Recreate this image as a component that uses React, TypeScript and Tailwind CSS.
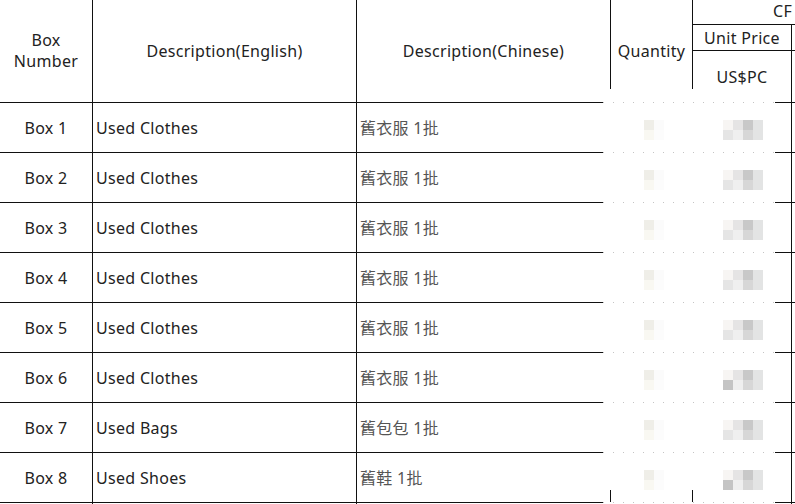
import React from "react";

const rows: [string, string, string, boolean][] = [
  ["Box 1", "Used Clothes", "舊衣服 1批", false],
  ["Box 2", "Used Clothes", "舊衣服 1批", false],
  ["Box 3", "Used Clothes", "舊衣服 1批", false],
  ["Box 4", "Used Clothes", "舊衣服 1批", false],
  ["Box 5", "Used Clothes", "舊衣服 1批", false],
  ["Box 6", "Used Clothes", "舊衣服 1批", true],
  ["Box 7", "Used Bags", "舊包包 1批", false],
  ["Box 8", "Used Shoes", "舊鞋 1批", true],
];

function Separator() {
  return (
    <div className="flex h-px w-full">
      <div className="w-[603px] bg-[#111]" />
      <div className="w-[172px] bg-[repeating-linear-gradient(90deg,#c4c4c4_0_1px,transparent_1px_10px)]" />
      <div className="flex-1 bg-[#111]" />
    </div>
  );
}

function QtyBlob() {
  return (
    <div className="grid grid-cols-[10px_10px] grid-rows-[10px_10px]">
      <div className="bg-[#efeee8]" />
      <div className="bg-[#fbfbfb]" />
      <div className="bg-[#f9f8f2]" />
      <div className="bg-[#fcfcfc]" />
    </div>
  );
}

function PriceBlob({ dark }: { dark: boolean }) {
  const top = ["#f7f5f3", "#e5e4e4", "#c8c8c8", "#e3e4e4"];
  const bottom = [dark ? "#c4c4c4" : "#e5e5e5", "#efefef", "#d7d7d7", "#e3e4e4"];
  return (
    <div className="grid grid-cols-[10px_10px_10px_10px] grid-rows-[10px_10px]">
      {[...top, ...bottom].map((c, i) => (
        <div key={i} style={{ backgroundColor: c }} />
      ))}
    </div>
  );
}

export default function App() {
  return (
    <div
      className="w-[795px] h-[504px] overflow-hidden bg-white text-[16px] tracking-[0.3px] text-[#222]"
      style={{ fontFamily: '"Noto Sans", "Noto Sans CJK TC", sans-serif' }}
    >
      {/* Header */}
      <div className="flex h-[102px]">
        <div className="w-[93px] border-r border-[#111] flex items-center justify-center text-center leading-[21px]">
          Box
          <br />
          Number
        </div>
        <div className="w-[264px] border-r border-[#111] flex items-center justify-center">
          Description(English)
        </div>
        <div className="w-[253px] flex items-center justify-center">
          Description(Chinese)
        </div>
        <div className="w-px h-[89px] bg-[#111]" />
        <div className="w-[81px] flex items-center justify-center">Quantity</div>
        <div className="w-px h-[89px] bg-[#111]" />
        <div className="flex-1 flex flex-col">
          <div className="h-[25px] border-b border-[#111] overflow-hidden whitespace-nowrap pl-[80px] leading-[23px]">
            CF
          </div>
          <div className="h-[26px] border-b border-[#111] flex">
            <div className="w-[99px] border-r border-[#111] flex items-center justify-center">
              Unit Price
            </div>
          </div>
          <div className="flex-1 flex">
            <div className="w-[99px] border-r border-[#111] flex items-center justify-center">
              US$PC
            </div>
          </div>
        </div>
      </div>
      <Separator />
      {rows.map(([box, en, zh, dark], i) => (
        <React.Fragment key={box}>
          <div className="flex h-[49px]">
            <div className="w-[93px] border-r border-[#111] flex items-center justify-center">
              {box}
            </div>
            <div className="w-[264px] border-r border-[#111] flex items-center pl-[3px]">
              {en}
            </div>
            <div className="w-[253px] flex items-center pl-[3px] text-[#555]">{zh}</div>
            <div className="w-px flex items-end">
              {i === rows.length - 1 && <div className="w-px h-[12px] bg-[#111]" />}
            </div>
            <div className="w-[81px] pl-[33px] pt-[17px]">
              <QtyBlob />
            </div>
            <div className="w-px flex items-end">
              {i === rows.length - 1 && <div className="w-px h-[12px] bg-[#111]" />}
            </div>
            <div className="w-[99px] border-r border-[#111] pl-[30px] pt-[17px]">
              <PriceBlob dark={dark} />
            </div>
            <div className="flex-1" />
          </div>
          <Separator />
        </React.Fragment>
      ))}
      <div className="flex h-[2px]">
        <div className="w-[93px] border-r border-[#111]" />
        <div className="w-[264px] border-r border-[#111]" />
        <div className="w-[253px]" />
        <div className="w-px" />
        <div className="w-[81px]" />
        <div className="w-px" />
        <div className="w-[99px] border-r border-[#111]" />
      </div>
    </div>
  );
}
